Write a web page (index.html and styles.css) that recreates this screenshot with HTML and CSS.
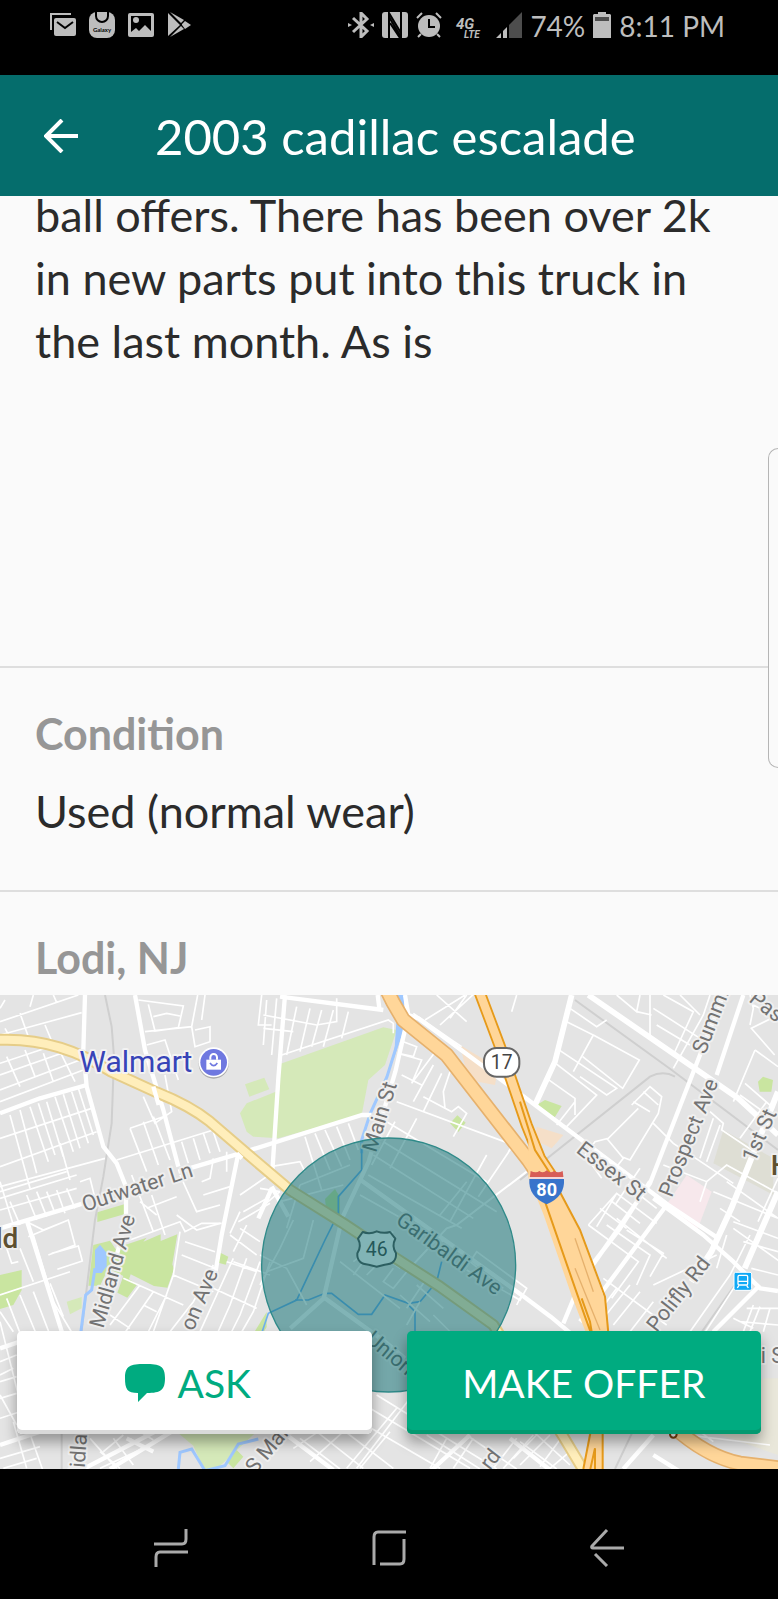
FILE: index.html
```html
<!DOCTYPE html>
<html lang="en">
<head>
<meta charset="utf-8">
<meta name="viewport" content="width=device-width, initial-scale=1">
<title>2003 cadillac escalade</title>
<link rel="stylesheet" href="styles.css">
</head>
<body>
<div class="status">
  <div class="status-left">
    <svg class="sicon" viewBox="0 0 26 26"><path d="M1 18V2h20" fill="none" stroke="#bdbdbd" stroke-width="2"/><rect x="4" y="6" width="22" height="18" rx="2" fill="#bdbdbd"/><path d="M7 10l8 6 8-6" fill="none" stroke="#000" stroke-width="2"/></svg>
    <svg class="sicon" viewBox="0 0 26 26"><rect width="26" height="26" rx="8" fill="#bdbdbd"/><path d="M7 0v4a6 6 0 0 0 12 0V0" fill="none" stroke="#000" stroke-width="2"/><text x="13" y="20" text-anchor="middle" class="galaxy">Galaxy</text></svg>
    <svg class="sicon" viewBox="0 0 26 26"><rect y="1" width="26" height="24" rx="2" fill="#bdbdbd"/><path d="M3 4h20v15l-6-6-6 6-3-3-5 4z" fill="#000"/><circle cx="8" cy="8" r="3" fill="#bdbdbd"/></svg>
    <svg class="sicon" viewBox="0 0 26 26"><path d="M1 1v23L13 13z M3 0l11 11 3-3z M3 25l11-11 3 3z M15 12l3-3 6 4-6 4-3-4z" fill="#bdbdbd"/></svg>
  </div>
  <div class="status-right">
    <svg class="sicon" viewBox="0 0 26 26"><path d="M5 6l14 13-6 6V1l6 6L5 20" fill="none" stroke="#bdbdbd" stroke-width="3"/><path d="M0 11v4l4-2zM26 11v4l-4-2z" fill="#bdbdbd"/></svg>
    <svg class="sicon" viewBox="0 0 26 26"><path d="M3 0h20q3 0 3 3v20q0 3-3 3H3q-3 0-3-3V3q0-3 3-3z" fill="#bdbdbd"/><path d="M7 26V1l12 20M19 0v25L7 5M8 11l10 15" fill="none" stroke="#000" stroke-width="2"/></svg>
    <svg class="sicon" viewBox="0 0 26 26"><circle cx="13" cy="14" r="11" fill="#bdbdbd"/><path d="M1 6l5-5M25 6l-5-5M5 22l-3 3M21 22l3 3" stroke="#bdbdbd" stroke-width="2"/><path d="M13 7v8h6" fill="none" stroke="#000" stroke-width="2"/></svg>
    <svg class="sicon lte" viewBox="0 0 26 26"><text x="0" y="17" class="g4">4G</text><text x="8" y="26" class="g5">LTE</text></svg>
    <svg class="sicon" viewBox="0 0 26 26"><path d="M13 13L26 0v26H13z" fill="#4d4d4d"/><path d="M0 26l5-5v5zM7 19l4-4v11H7z" fill="#bdbdbd"/></svg>
    <span>74%</span>
    <svg class="battery" viewBox="0 0 18 26"><path d="M5 0h8v2h4l1 1v23H0V3l1-1h4z" fill="#bdbdbd"/><path d="M2 5h14v4H2z" fill="#4d4d4d"/></svg>
    <span>8:11 PM</span>
  </div>
</div>
<header class="header">
  <button class="back" aria-label="Back"><svg viewBox="0 0 34 34"><path d="M34 17H3M18 1L2 17l16 16" fill="none" stroke="#fff" stroke-width="4"/></svg></button>
  <h1>2003 cadillac escalade</h1>
</header>
<main>
  <section class="desc"><p>ball offers. There has been over 2k in new parts put into this truck in the last month. As is</p></section>
  <section class="cond"><h2>Condition</h2><p>Used (normal wear)</p></section>
  <section class="place"><h2>Lodi, NJ</h2></section>
  <div class="edge"></div>
  <section class="map">
    <svg class="mapart" viewBox="0 0 2334 1422" preserveAspectRatio="xMidYMid slice" role="img" aria-label="Map of Lodi, NJ">
      <rect width="2334" height="1422" fill="#e4e4e4"/>
      <!-- parks and special areas -->
      <g fill="#d5e9b9">
        <path d="M840 207L1150 97l40 8-35 105-50 45-20 105-250 70-75-5-20-15-20-55 20-30 100-40z"/>
        <path d="M735 268l58-20 15 35-60 22z"/>
        <path d="M200 920l45-14v34l-35 18z"/>
        <path d="M530 1310h240l-120 112h-40l-30-70z"/>
      </g>
      <g fill="#c9e5a0">
        <path d="M292 652l83-25v30l-83 24z"/>
        <path d="M430 740l52-22v20l50-20-15 90 5 15-20 55-40-5-70-35-5 15 25 15-30 40-30-15 18-50-50-25 30-60 90-30z"/>
        <path d="M280 750l50-13 20 30-50 105h-35z"/>
        <path d="M0 840l65-15v60l-25 45-40 12z"/>
        <path d="M655 770l30 15-8 24-30-8z"/>
        <path d="M1350 385l22-24 25 22-22 28z"/>
        <path d="M1610 330l25-15 50 18-22 36-20-4z"/>
        <path d="M2274 260l15-15 30 10-5 35-35 0z"/>
        <path d="M975 612l30-30 15 25v50h-40z"/>
        <path d="M680 1400l30-35 20 20-30 35z"/>
        <path d="M765 1008l35-57v45l-15 25z"/>
      </g>
      <path d="M2060 540l75 50-45 120-98-70z" fill="#f7e8ec"/>
      <path d="M2170 405l150 85v110l-180-95z" fill="#deded4"/>
      <path d="M2290 1150h44v230l-200-70z" fill="#e9e7da"/>
      <g fill="#f5dfc8">
        <path d="M1380 150l115 70-10 50-80-15z"/>
        <path d="M1610 395l80 25-35 40-50-25z"/>
      </g>
      <path d="M285 765l15-16 20 25v40l-15 20h-20z" fill="#9fc8ff"/>
      <!-- railways -->
      <g fill="none" stroke="#cfcfcf" stroke-width="6">
        <path d="M315 0l20 95 7 90-7 200-25 160-25 130-40 330-60 200v217"/>
        <path d="M1725 15l290 210 319 240"/>
        <path d="M1560 555l390-310q40-20 75 0"/>
        <path d="M2215 855l-310 440-60 127"/>
      </g>
      <!-- water -->
      <g fill="none" stroke="#9fc8ff" stroke-width="9">
        <path d="M1206 0v100l-45 145-50 110-26 80v40"/>
        <path d="M285 820l-10 65-18 15-15 115"/>
        <path d="M535 1422l5-50 35-10 40 65 60-15 40-65 60-15"/>
      </g>
      <g fill="none" stroke="#6fb0ee" stroke-width="5">
        <path d="M1085 460v65l-70 80v50l-40 80-85 180-85 40-20 60"/>
        <path d="M885 915h40l50-20h20l80 63h40l40-58 70 25 35-5 50-60 15-60M1225 930l20 20v75"/>
      </g>
      <path d="M1194 0h18v100l-30 90z" fill="#9fc8ff"/>
      <!-- minor streets -->
      <g fill="none" stroke="#fff" stroke-width="5">
        <path d="M0 80L235 0M0 120L245 53M60 55l25 70M15 100l25 45M135 90l25 60M100 0l-10 35M160 0l10 22M0 40l15-25M0 205l150-50M0 240l185-65M0 285l240-90M20 185l40 90M75 165l30 80M130 175l30 85M0 320l250-95M180 170l45 90"/>
        <path d="M0 430l275-90M0 515l290-105M0 575l315-85M30 360l60 220M60 345l50 190M90 335l55 165M115 325l50 155M140 320l50 165M165 305l55 165M190 298l50 162M215 290l50 155M235 280l45 140M0 590l200-60M180 445l30 110M0 610l230-70"/>
        <path d="M0 645l230-65M30 620l30 70M80 600l30 75M110 590l30 75M140 590l25 65M170 585l25 70M200 580l25 60M240 560l30-10 20 80M0 560l40 130"/>
        <path d="M415 15l135 18-15 65-70 10-20-80M460 65l40-10 40 8M435 110l140-15 18-95M575 95l10 60 45-15v-45l-45 10M615 0l-10 75M440 150l55-15 40 120M430 305l35 80 50-35-20-110M390 400l50 130M430 380l45 130M460 365l50 130M390 400l100-35M350 495l290-90M545 440l20 65M580 430l20 65M610 415l20 60M640 410l20 60M785 0l-10 90h40"/>
        <path d="M395 540l65 170M420 620l50 40M455 600l40 120M440 640l90-35M540 540l50 110 70-20M610 600l80-25M530 660l60 45 70-20M720 600l80-55M730 650l80-45M715 680l95-55M690 715l30-65M640 490l-10 60-25 10M680 470v60"/>
        <path d="M800 15l-10 135M830 10l-15 170M790 60l160 30 60-10v-70M790 100l90 10M890 35l-30 145M930 40l-30 130M965 45l-30 110M1000 45l-30 110M1045 50l-20 80M845 180l320-105 15 10v30M915 425l50 160M945 415l45 110M975 405l50 110M1010 395l40 100M1045 385l30 80M780 520l120-20 15 30M780 580l60 10M900 570l150-60M780 640l60-50M840 620l190-50M860 700l40-130"/>
        <path d="M1210 140l40 15-10 30-45-10M1195 175l70 20-30 70M1235 265l75-100M1240 320l60-110M1270 350l55-115M1205 240l60 30M1190 320l350 130-15 20M1160 380l300 180M1150 440l340 210M1120 480l300 190M1105 540l280 160M1080 600l250 140M1185 380l-70 130M1250 370l-80 150M1270 305l85 45 20-15 25 20-40 70M1350 230l-20 60 5 50M1460 480l-110 200M1540 450l-105 155M1400 560l-80 100M1265 75l120 80M1240 55l130 90M1275 75l120-75M1320 90l120-110M1400 0l-50 70M1310 0l90 80"/>
        <path d="M1710 40l80 55 30-20M1700 80l80 40-60 110M1780 120l138 75-50 85-120-95M1670 160l180 120-30 20-80-55M1660 200l130 100-90 95M1640 250l85 60v50M1670 390l55-70M1550 0l-15 50M1850 0l60 50 10-50M1910 50l45 10M1950 0v130M1960 40l140 90M1970 90l100 60M1990 0l90 50-60 130M2040 0l60 60M2130 0l-20 60-90 160"/>
        <path d="M1895 330l55-55 35 30-10 50-85 140-25-10M1900 320l50 30M1930 290l45 40M1915 340l-90 90-40 10-30 40 50 70M1820 430l50 60-20 25M1960 385l60 60 180 120M2140 370l-40 120M2160 390l-40 110M2130 350l40 35-5 20 90 60M2260 30l60 30M2334 60l-80 40 70 80M2265 165l69 50M2265 165l-65 155M2235 265l80 70M2220 300l90 65M2300 320l-80 110M2250 0l10 40-10 50"/>
        <path d="M1765 690l85-95 120 90M1800 640l80 60M1830 615l90 70M1880 570l90 70M1850 595l-60 100M1920 520l-75 110M1990 510l130 50 60-50 154 85M2120 560l-20 60M2140 590l194 80M2180 560l154 110M2334 550l-60 130M2200 680l134 50M2160 640l60 40"/>
        <path d="M1765 690l150 110-80 110M1820 690l130 90-40 90M1850 670l150 120M1880 705l110 70-40 70M1810 850l190 140M1850 880l-60 80M1890 870l-80 100M1920 890l-80 100M1960 920l-70 90M2190 840l-120 170M2220 850l-110 170M2150 780l-190 90M2180 720l-30 100M2200 700l140 100M2250 720l-60 120M2230 740l104 30M2240 940h94M2220 980l114 10M2260 930l-30 80M2280 935l-30 75M2310 940l-20 70M2200 970l60 30M2334 840l-80-20"/>
        <path d="M80 680l50 25 75-30 20 75-80 30M100 720l60 200 60 100M205 675l-120 50M155 775l80-22 12 45-75 25M0 900l210-70M20 910l50 130M60 900l50 120M100 890l50 130M150 865l40 100M20 760l15 45 20-5M60 760l40 100M0 950l40 60"/>
        <path d="M0 1100l50-20M0 1160l50-15M0 1210l50-15M0 1270l60-20M0 980l70 280 60 170M40 1280l40 140M0 1390l120-35M10 1420l100-30M0 1200l50 90M40 1120l-40 20M60 1300l50-20M270 1330l80 90M300 1370l60 50M340 1330l60 80M390 1330l40 30-130 60M420 1310l40 25M310 1370l60-50"/>
        <path d="M375 740l165-60 15 30 50-25h60M540 710l-20 130-60 170M370 850l180 80M420 870l-90 120M460 890l-90 130M500 900l-60 120M555 740l90 30M545 780l100 40M520 840l120 50M640 810l-60 110-70 90M700 790l-50 110-50 110M740 790l-50 140-40 90M780 800l-60 160-30 60M810 800l-50 150-40 70M640 880l130 60M700 800l110 40M720 700l60 40M690 720l80 60M680 800l90 30M740 690l-40 80M330 960l60 40M430 930l40 20"/>
        <path d="M780 870l60-110 40-85M800 830l110-40 30-115M780 780l80 40 60 110M1020 800l180 140M1060 800l120-90M1130 770l70 50M1060 840l90-120M1100 840l50-50M1180 820l-30 40 30 20 40-50M1220 800l60 50-60 90M1250 870l80 70M1200 900l90 80M1260 920l-40 70M1390 830l40-60 150 110-20 35-160-90M1410 800l100 80"/>
        <path d="M1110 1240l300 180M1080 1280l240 140M1010 1290l170 130M950 1310l140 110M900 1330l120 92M1130 1200l360 222M1190 1240l-150 180M1230 1210l-160 210M1170 1310l-90 110M1340 1330l-50 90M1420 1330l-60 90M1550 1330l-70 90M1600 1320l-90 100M1280 1320l160 102M1400 1320l150 102M880 1360l90-60M930 1400l100-90"/>
        <path d="M1560 1340l110 82M1600 1310l110 100M1650 1320l-90 90M1710 1370l-60 50M1610 1320l-70 70M1690 1320l-70 95M1980 1310l330 40M2100 1310l40 30M1550 930l15-30M1300 960l60 60"/>
      </g>
      <!-- larger streets -->
      <g fill="none" stroke="#fff" stroke-width="13" stroke-linejoin="round">
        <path d="M255 0l-5 165 10 110 50 180 40 50 28 70v95l-30 120"/>
        <path d="M405 0l30 165 55 180 45 170"/>
        <path d="M0 355l120-45 140-40M0 700l250-75M535 530l185-55 365-115h30"/>
        <path d="M715 475l-50 245-20 120M855 0l-20 250-18 280M840 5l310 40M1133 0l5 40M815 575l50 90M815 580l-40 90"/>
        <path d="M1215 0l10 60 30 10 290 215 460 345 150 100"/>
        <path d="M1216 100l-30 130-80 270-80 170-55 240-100 90"/>
        <path d="M1082 555l490 350 80 60 60 50M975 910l180 130 60 50"/>
        <path d="M1715 0l-50 200-60 130M1765 0l450 310 119 110" stroke-width="17"/>
        <path d="M2230 0l-80 240M2170 0l-220 565-210 300-50 120M1950 560l-90 140-100 130"/>
        <path d="M2334 290l-140 350-60 130-60 90M2334 590l-100 230" stroke-width="18"/>
        <path d="M1960 610l150 110 90 80 80 80 54 8M2000 630l-260 350M2280 870l-140 140"/>
        <path d="M80 675l110 350M0 1060l60-20M0 1350l150-50M250 1422l250-130M330 1422l190-115M380 1330l80 40M1410 1320l-120 110M860 1320l140 105M1960 1320l-90 102M1960 1380l80 50M1530 1330l120 95"/>
        <path d="M1580 530l-210 160-30 10-120 130" stroke-width="6"/>
      </g>
      <!-- route 46 -->
      <g fill="none" stroke-linejoin="round">
        <path stroke="#e6cd88" stroke-width="36" d="M-10 135q180-10 340 93l140 64q100 40 160 88l110 95 130 110 160 100 150 100 140 90 160 115 210 335 60 100"/>
        <path stroke="#ffeebb" stroke-width="24" d="M-10 135q180-10 340 93l140 64q100 40 160 88l110 95 130 110 160 100 150 100 140 90 160 115 210 335 60 100"/>
      </g>
      <path d="M460 275l16 55M710 475l16 15" stroke="#fff" stroke-width="13"/>
      <!-- highways -->
      <g fill="none" stroke-linejoin="round">
        <path stroke="#e69a1a" stroke-width="36" d="M1438-10l62 165 80 235 40 100 40 60"/>
        <path stroke="#ffd699" stroke-width="25" d="M1438-10l62 165 80 235 40 100 40 60"/>
        <path stroke="#e6b16d" stroke-width="46" d="M1163-10l15 30 32 55 130 105 245 315 75 110"/>
        <path stroke="#ffd699" stroke-width="36" d="M1163-10l15 30 32 55 130 105 245 315 75 110"/>
      </g>
      <path d="M1585 390l20 65 45 85 90 170 75 205 15 110-22 125v272h-58l25-160-10-230-50-130-85-245-45-110z" fill="#ffd699"/>
      <g fill="none" stroke="#e69a1a" stroke-width="6">
        <path d="M1560 320l45 145 45 70 90 170 75 200 10 110M1635 620l120 345 22 60M1745 910l25 70 10 60M1772 1310l-22 112M1808 1310v112M1785 1360l-14 62M1785 1360v62"/>
      </g>
      <g fill="none" stroke="#e6b16d" stroke-width="4"><path d="M1725 820l75 185M1725 730l55 160"/></g>
      <path fill="none" stroke="#e6b16d" stroke-width="46" d="M2020 1295q100 90 200 110l120 15"/>
      <path fill="none" stroke="#ffd699" stroke-width="36" d="M2020 1295q100 90 200 110l120 15"/>
      <circle cx="2020" cy="1318" r="10" fill="#fff" stroke="#7a4310" stroke-width="6"/>
      <!-- labels -->
      <g class="labels">
        <text transform="translate(254 650) rotate(-18)">Outwater Ln</text>
        <text transform="translate(1128 475) rotate(-73)">Main St</text>
        <text transform="translate(1726 470) rotate(38)">Essex St</text>
        <text transform="translate(2015 610) rotate(-68)">Prospect Ave</text>
        <text transform="translate(2116 180) rotate(-69)">Summit</text>
        <text transform="translate(2264 505) rotate(-66)">1st St</text>
        <text transform="translate(2244 18) rotate(38)">Pas</text>
        <text transform="translate(310 1002) rotate(-74)">Midland Ave</text>
        <text transform="translate(580 1010) rotate(-67)">on Ave</text>
        <text transform="translate(250 1475) rotate(-86)">Midland</text>
        <text transform="translate(765 1440) rotate(-50)">S Main</text>
        <text transform="translate(1184 683) rotate(36)">Garibaldi Ave</text>
        <text transform="translate(1094 1038) rotate(40)">Union</text>
        <text transform="translate(1970 1015) rotate(-52)">Polifly Rd</text>
        <text transform="translate(1470 1428) rotate(-52)">rd</text>
        <text x="2282" y="1105">i S</text>
      </g>
      <text class="town" x="55" y="760" text-anchor="end">ld</text>
      <text class="town" x="2312" y="540">H</text>
      <text class="shop" x="238" y="230">Walmart</text>
      <circle cx="641" cy="206" r="45" fill="#aaa"/><circle cx="641" cy="202" r="45" fill="#fff"/><circle cx="641" cy="202" r="40" fill="#6f78e0"/>
      <path d="M619 194h44v30h-44z" fill="#fff"/><path d="M631 194v-7a10 10 0 0 1 20 0v7" fill="none" stroke="#fff" stroke-width="6"/><path d="M630 204q11 16 22 0" fill="none" stroke="#6f78e0" stroke-width="5"/>
      <rect x="1452" y="159" width="106" height="86" rx="38" fill="#fff" stroke="#666" stroke-width="6"/>
      <text class="num" x="1505" y="223">17</text>
      <path d="M1592 528q17 8 26 0 12 8 22-2 11 10 22 2 12 8 26 0l3 24h-102z" fill="#d75d57"/>
      <path d="M1588 552h104q4 52-52 76-56-24-52-76z" fill="#3874cb"/><path d="M1588 549h104" stroke="#fff" stroke-width="5"/>
      <text class="num inter" x="1640" y="604">80</text>
      <path d="M1088 711q22 8 42-2 20 8 40 2l16 20q-12 22 2 44 2 32-34 34l-24 6-24-6q-36-2-34-34 14-22 2-44z" fill="#fff" stroke="#555" stroke-width="6" stroke-linejoin="round"/>
      <text class="num" x="1130" y="784">46</text>
      <rect x="2202" y="832" width="53" height="54" rx="5" fill="#11a9f5" stroke="#fff" stroke-width="3"/>
      <rect x="2214" y="841" width="29" height="29" rx="4" fill="none" stroke="#fff" stroke-width="4"/><path d="M2214 859h29M2217 871l-5 8M2240 871l5 8" stroke="#fff" stroke-width="4"/>
      <circle cx="1166" cy="810" r="381" fill="#046a6e" fill-opacity=".5" stroke="#2f8a89" stroke-width="4"/>
    </svg>
    <div class="actions">
      <button class="btn ask"><svg viewBox="0 0 40 38"><path d="M20 0c15 0 20 2 20 14s-4 15-18 15l-9 9V29C2 29 0 25 0 14 0 2 5 0 20 0z" fill="#00ab80"/></svg>ASK</button>
      <button class="btn offer">MAKE OFFER</button>
    </div>
  </section>
</main>
<nav class="nav">
  <button aria-label="Recent apps"><svg viewBox="0 0 34 38"><path d="M0 15h28q4 0 4-5V0M34 23H6q-4 0-4 5v10" fill="none" stroke="#aaa" stroke-width="3"/></svg></button>
  <button aria-label="Home"><svg viewBox="0 0 34 38"><path d="M34 3H6Q2 3 2 8v28M32 10v20q0 5-4 5H8" fill="none" stroke="#aaa" stroke-width="3"/></svg></button>
  <button aria-label="Back"><svg viewBox="0 0 34 38"><path d="M17 1L2 17q-1 2 1 2h31M5 25l12 12" fill="none" stroke="#aaa" stroke-width="3"/></svg></button>
</nav>
</body>
</html>
```
FILE: styles.css
```css
* { box-sizing: border-box; }
body { margin: 0; background: #000; font-family: Lato, "Open Sans", sans-serif; color: #2b2b2b; }
button { border: 0; padding: 0; background: none; font: inherit; color: inherit; cursor: pointer; }
h1, h2, p { margin: 0; font-weight: 400; }
svg { display: block; }

.status { display: flex; justify-content: space-between; height: 75px; padding: 12px 53px 0 50px; color: #bdbdbd; font-size: 28px; line-height: 28px; }
.status-left, .status-right { display: flex; align-items: flex-start; }
.status-left { gap: 13px; }
.status-right { gap: 8px; }
.sicon { width: 26px; height: 26px; flex: none; }
.battery { width: 18px; height: 26px; }
.lte { margin: 0 6px; overflow: visible; }
.galaxy { font: 700 6px Lato, sans-serif; fill: #000; }
.g4 { font: italic 700 15px Roboto, sans-serif; fill: #bdbdbd; }
.g5 { font: italic 700 10px Roboto, sans-serif; fill: #bdbdbd; }

.header { position: relative; z-index: 1; display: flex; align-items: center; gap: 77px; height: 121px; padding: 0 44px; background: #056d6c; color: #fff; }
.back { width: 34px; height: 34px; flex: none; }
.header h1 { font-size: 49px; line-height: 60px; white-space: nowrap; }

main { position: relative; background: #fafafa; font-size: 45px; }
.desc { display: flow-root; height: 472px; padding: 0 35px; border-bottom: 2px solid #dedede; }
.desc p { margin-top: -12px; line-height: 63px; }
.cond { height: 224px; padding: 36px 35px 0; border-bottom: 2px solid #dedede; }
.cond p { margin-top: 16px; line-height: 62px; }
h2 { color: #969696; font-size: 43px; font-weight: 700; line-height: 60px; }
.place { height: 103px; padding: 36px 35px 0; }
.edge { position: absolute; right: 0; top: 252px; width: 10px; height: 320px; border: 1px solid #b5b5b5; border-right: 0; border-radius: 14px 0 0 14px; background: #fafafa; }

.map { position: relative; height: 474px; overflow: hidden; }
.mapart { width: 100%; height: 100%; }
.labels text { font: 64px Roboto, sans-serif; fill: #737373; stroke: #efefef; stroke-width: 12px; stroke-linejoin: round; paint-order: stroke; }
.town { font: 500 84px Roboto, sans-serif; fill: #5e5030; stroke: #efefef; stroke-width: 10px; paint-order: stroke; }
.shop { font: 90px Roboto, sans-serif; fill: #3744b8; stroke: #f2f2f2; stroke-width: 12px; stroke-linejoin: round; paint-order: stroke; }
.num { font: 58px Roboto, sans-serif; fill: #444; text-anchor: middle; }
.inter { font-weight: 700; font-size: 54px; fill: #fff; }

.actions { position: absolute; left: 17px; right: 17px; bottom: 35px; display: grid; grid-template-columns: 1fr 1fr; gap: 35px; }
.btn { display: flex; align-items: center; justify-content: center; gap: 13px; height: 103px; border-radius: 5px; font-size: 39px; }
.btn svg { width: 40px; height: 38px; }
.ask { padding-right: 13px; background: #fff; color: #00ab80; box-shadow: inset 0 -4px #d9d9d9, 0 8px 14px rgba(0, 0, 0, .35); }
.offer { background: #00ab80; color: #fff; box-shadow: inset 0 -4px #049970, 0 8px 14px rgba(0, 0, 0, .35); }

.nav { display: flex; justify-content: center; align-items: center; gap: 184px; height: 130px; padding-top: 28px; }
.nav svg { width: 34px; height: 38px; }
```
